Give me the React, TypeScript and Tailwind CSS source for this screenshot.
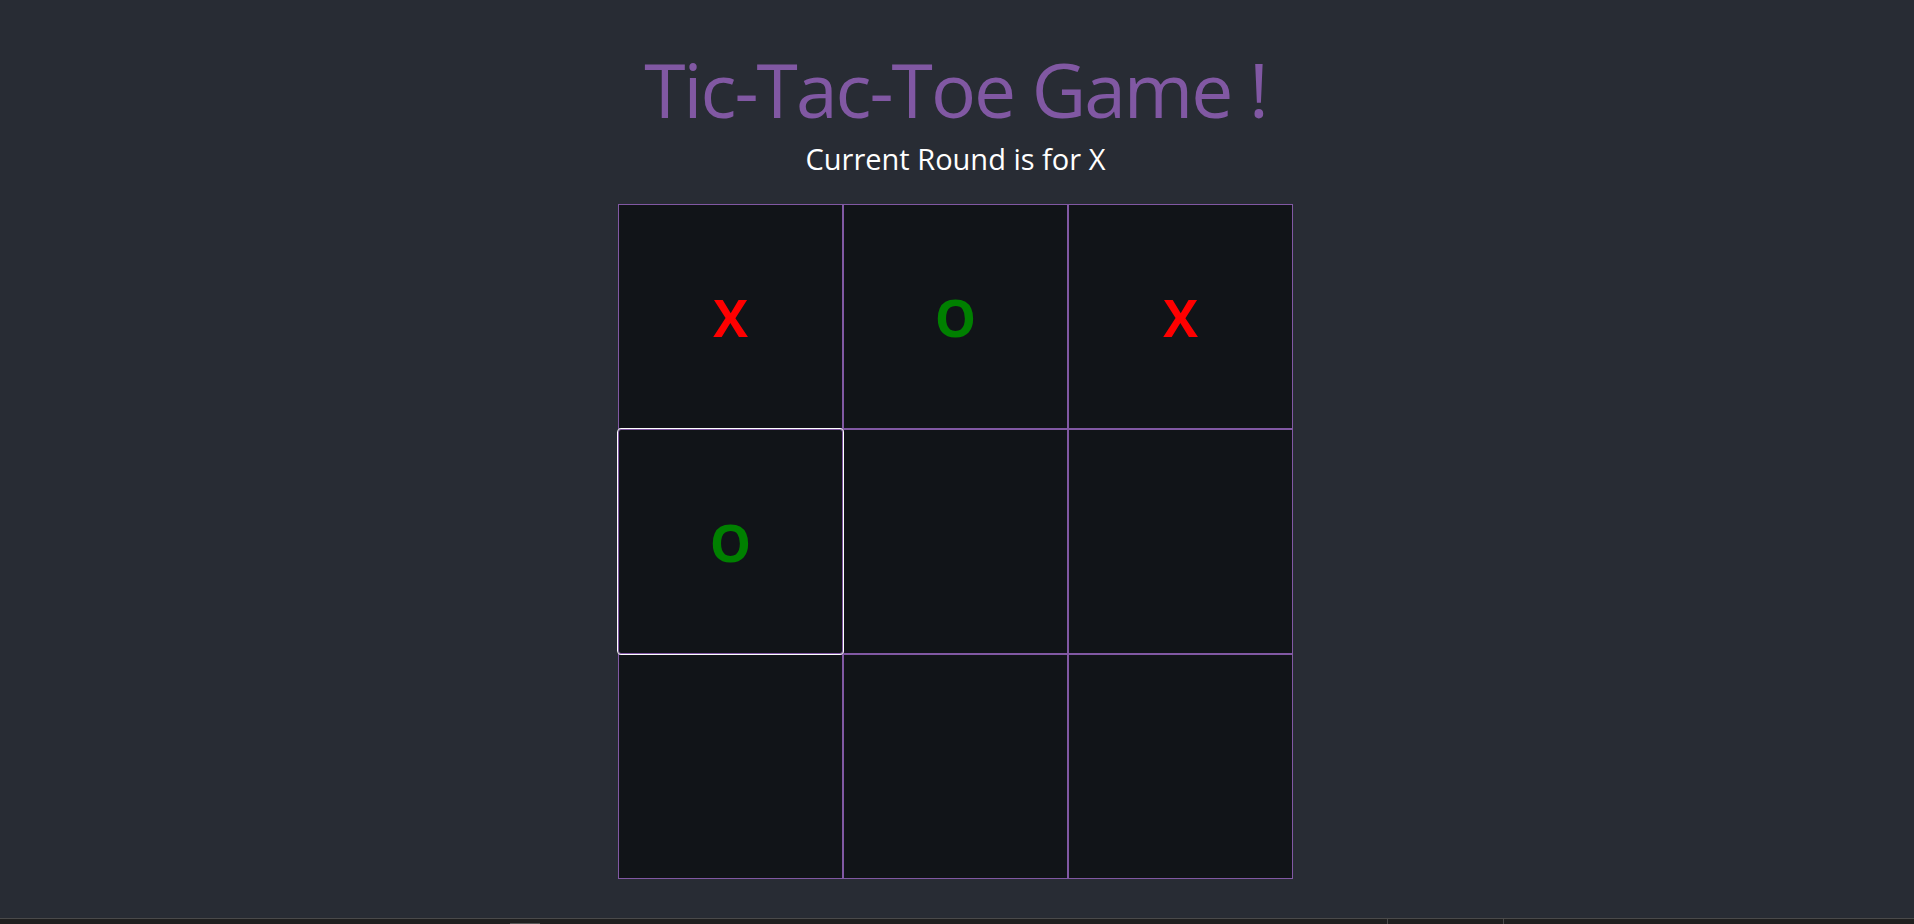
import React from "react";

const cells: (string | null)[] = ["X", "O", "X", "O", null, null, null, null, null];

export default function App() {
  return (
    <div className="h-screen w-full flex flex-col bg-[#282c34]" style={{ fontFamily: '"Open Sans", "Noto Sans", sans-serif' }}>
      <main className="flex-1 flex flex-col items-center pr-[3px]">
        <h1 className="mt-[52px] text-[75px] leading-none font-normal tracking-[-2px] text-[#8158a3]">Tic-Tac-Toe Game !</h1>
        <p className="mt-[17px] text-[29px] leading-none text-white">Current Round is for X</p>
        <div className="mt-[31px] grid grid-cols-[repeat(3,225px)]">
          {cells.map((c, i) => (
            <div
              key={i}
              className={
                "h-[225px] w-[225px] flex items-center justify-center border border-[#8158a3] bg-[#111418] text-[52px] font-bold leading-none " +
                (c === "X" ? "text-[#ff0000] " : "text-[#008000] ") +
                (i === 3 ? "relative z-10 rounded-[3px] outline outline-1 outline-white" : "")
              }
            >
              {c}
            </div>
          ))}
        </div>
      </main>
      <footer className="relative h-[6px] border-t border-[#4a4a4a] bg-[#1f1f1f] flex">
        <div className="absolute left-[1387px] top-0 h-full w-px bg-[#4a4a4a]" />
        <div className="absolute left-[1503px] top-0 h-full w-px bg-[#4a4a4a]" />
        <div className="absolute left-[510px] bottom-0 h-px w-[30px] bg-[#555]" />
      </footer>
    </div>
  );
}
